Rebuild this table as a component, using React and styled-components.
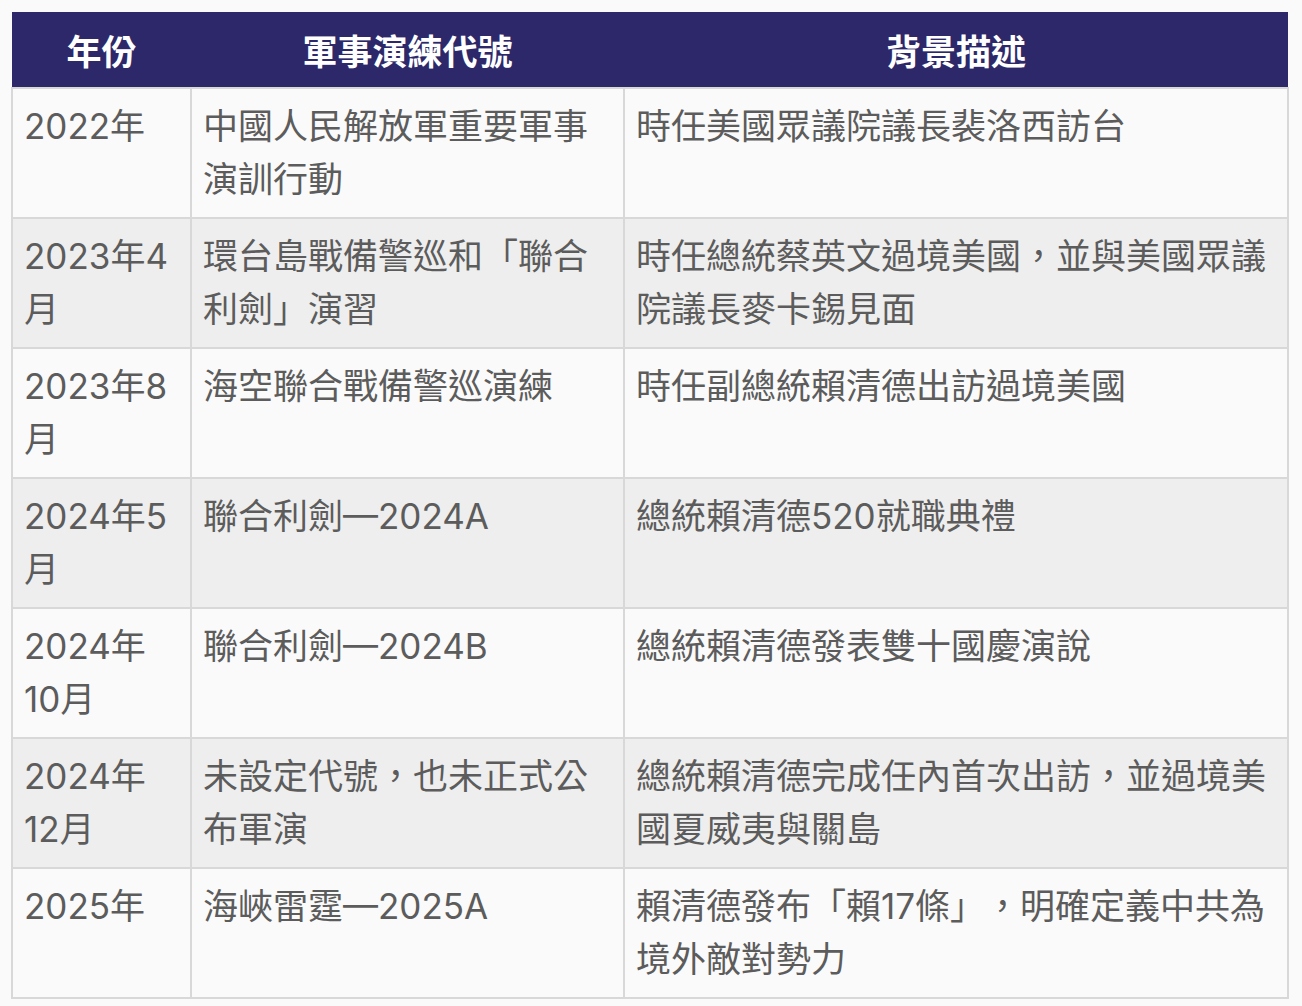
import React from "react";
import styled, { createGlobalStyle } from "styled-components";

const Global = createGlobalStyle`
  html, body {
    margin: 0;
    padding: 0;
    background: #fafafa;
  }
  body {
    font-family: "Inter", "Noto Sans CJK TC", sans-serif;
  }
`;

const Page = styled.div`
  padding: 12px 15px 0 11px;
`;

const Table = styled.table`
  width: 1276px;
  border-collapse: collapse;
  table-layout: fixed;
  font-family: "Inter", "Noto Sans CJK TC", sans-serif;
  text-spacing-trim: space-all;
`;

const HeadRow = styled.tr`
  background: #2c2869;
`;

const Th = styled.th`
  height: 76px;
  padding: 0 12px;
  color: #ffffff;
  font-family: "Noto Sans CJK TC", sans-serif;
  font-weight: 700;
  font-size: 35px;
  line-height: 53px;
  text-align: center;
  border: none;
  box-sizing: border-box;
`;

const Row = styled.tr`
  background: ${(p) => (p.$shaded ? "#eeeeee" : "#fafafa")};
`;

const Td = styled.td`
  vertical-align: top;
  padding: 11px 11px;
  border: 2px solid #d8d8d8;
  color: #5c5c5c;
  font-size: 35px;
  line-height: 53px;
  text-spacing-trim: space-all;
`;

const rows = [
  ["2022年", "中國人民解放軍重要軍事演訓行動", "時任美國眾議院議長裴洛西訪台"],
  ["2023年4月", "環台島戰備警巡和「聯合利劍」演習", "時任總統蔡英文過境美國，並與美國眾議院議長麥卡錫見面"],
  ["2023年8月", "海空聯合戰備警巡演練", "時任副總統賴清德出訪過境美國"],
  ["2024年5月", "聯合利劍—2024A", "總統賴清德520就職典禮"],
  ["2024年10月", "聯合利劍—2024B", "總統賴清德發表雙十國慶演說"],
  ["2024年12月", "未設定代號，也未正式公布軍演", "總統賴清德完成任內首次出訪，並過境美國夏威夷與關島"],
  ["2025年", "海峽雷霆—2025A", "賴清德發布「賴17條」，明確定義中共為境外敵對勢力"],
];

export default function App() {
  return (
    <>
      <Global />
      <Page>
        <Table>
          <colgroup>
            <col style={{ width: "179px" }} />
            <col style={{ width: "433px" }} />
            <col style={{ width: "664px" }} />
          </colgroup>
          <thead>
            <HeadRow>
              <Th>年份</Th>
              <Th>軍事演練代號</Th>
              <Th>背景描述</Th>
            </HeadRow>
          </thead>
          <tbody>
            {rows.map((r, i) => (
              <Row key={i} $shaded={i % 2 === 1}>
                <Td>{r[0]}</Td>
                <Td>{r[1]}</Td>
                <Td>{r[2]}</Td>
              </Row>
            ))}
          </tbody>
        </Table>
      </Page>
    </>
  );
}
